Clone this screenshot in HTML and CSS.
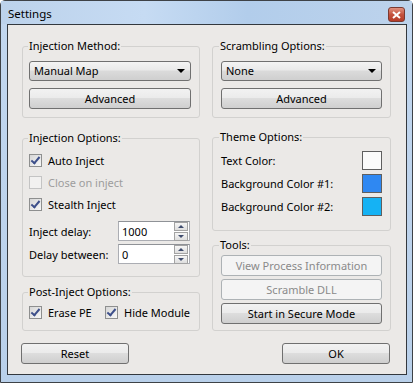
FILE: index.html
```html
<!DOCTYPE html>
<html lang="en">
<head>
    <meta charset="UTF-8">
    <title>Settings</title>
    <link rel="stylesheet" href="styles.css">
</head>
<body>
    <div class="window">
        <div class="titlebar">
            <span class="title">Settings</span>
            <span class="close">
                <svg width="9" height="8" viewBox="0 0 9 8"><path d="M1 1 L8 7 M8 1 L1 7" stroke="#fff" stroke-width="2"/></svg>
            </span>
        </div>
        <div class="client">
            <div class="columns">
                <div class="col">
                    <fieldset class="grp g-method">
                        <legend>Injection Method:</legend>
                        <div class="combo">Manual Map<span class="arrow"></span></div>
                        <div class="btn">Advanced</div>
                    </fieldset>
                    <fieldset class="grp g-inject">
                        <legend>Injection Options:</legend>
                        <div class="chk-row"><span class="chk on"></span>Auto Inject</div>
                        <div class="chk-row disabled"><span class="chk"></span>Close on inject</div>
                        <div class="chk-row"><span class="chk on"></span>Stealth Inject</div>
                        <div class="spin-row first">
                            <span class="spin-label">Inject delay:</span>
                            <div class="spin"><span class="val">1000</span><span class="arrows"><span class="up"></span><span class="down"></span></span></div>
                        </div>
                        <div class="spin-row">
                            <span class="spin-label">Delay between:</span>
                            <div class="spin"><span class="val">0</span><span class="arrows"><span class="up"></span><span class="down"></span></span></div>
                        </div>
                    </fieldset>
                    <fieldset class="grp g-post">
                        <legend>Post-Inject Options:</legend>
                        <div class="post-row">
                            <div class="chk-row erase"><span class="chk on"></span>Erase PE</div>
                            <div class="chk-row"><span class="chk on"></span>Hide Module</div>
                        </div>
                    </fieldset>
                </div>
                <div class="col right">
                    <fieldset class="grp g-method">
                        <legend>Scrambling Options:</legend>
                        <div class="combo">None<span class="arrow"></span></div>
                        <div class="btn">Advanced</div>
                    </fieldset>
                    <fieldset class="grp g-theme">
                        <legend>Theme Options:</legend>
                        <div class="theme-row">Text Color:<span class="swatch white"></span></div>
                        <div class="theme-row">Background Color #1:<span class="swatch blue"></span></div>
                        <div class="theme-row">Background Color #2:<span class="swatch cyan"></span></div>
                    </fieldset>
                    <fieldset class="grp g-tools">
                        <legend>Tools:</legend>
                        <div class="btn off">View Process Information</div>
                        <div class="btn off">Scramble DLL</div>
                        <div class="btn">Start in Secure Mode</div>
                    </fieldset>
                </div>
            </div>
            <div class="footer">
                <div class="btn wide">Reset</div>
                <div class="btn wide">OK</div>
            </div>
        </div>
    </div>
</body>
</html>
```
FILE: styles.css
```css
body {
    margin: 0;
    font-family: "Noto Sans", "Open Sans", sans-serif;
    font-size: 11px;
    color: #000;
    background: #fff;
}
.window {
    width: 413px;
    height: 383px;
    box-sizing: border-box;
    border: 1px solid #3e4247;
    border-radius: 5px 5px 0 0;
    padding: 0 5px 7px 6px;
    background: linear-gradient(to bottom, #c2d7ef, #b9d0ea);
}
.titlebar {
    height: 23px;
    display: flex;
    align-items: flex-start;
    background: linear-gradient(to right, #bcd2eb, #c6dbf3 35%, #b2cdeb 60%, #bdd3ec);
    margin: 0 -5px 0 -6px;
    padding: 0 6px 0 7px;
}
.title {
    line-height: 14px;
    margin-top: 6px;
    font-size: 11.5px;
}
.close {
    margin-left: auto;
    margin-top: 6px;
    margin-right: 1px;
    width: 15px;
    height: 13px;
    border: 1px solid #7b3a31;
    border-radius: 3px;
    background: linear-gradient(to bottom, #e1917f, #c4533f 50%, #b53b28);
    display: flex;
    align-items: center;
    justify-content: center;
}
.client {
    height: 351px;
    box-sizing: border-box;
    border: 1px solid #33383e;
    background: #ebe9e7;
    padding: 13px 15px 0 14px;
}
.columns {
    display: flex;
    gap: 12px;
}
.col {
    width: 178px;
    display: flex;
    flex-direction: column;
}
.col.right {
    width: 179px;
}
.grp {
    margin: 0;
    border: 1px solid #d2d1cf;
    border-radius: 3px;
    padding: 0 8px 0 6px;
    min-width: 0;
}
.grp legend {
    padding: 0 1px;
    margin-left: -1px;
    line-height: 16px;
}
.right .grp {
    padding-left: 8px;
}
.right .grp legend {
    margin-left: -2px;
}
.g-method {
    padding-top: 7px;
    padding-bottom: 8px;
}
.combo {
    height: 20px;
    box-sizing: border-box;
    border: 1px solid #707070;
    border-radius: 3px;
    background: linear-gradient(to bottom, #f4f4f4, #e9e9e9 45%, #dbdbdb 50%, #cfcfcf);
    padding-left: 4px;
    line-height: 18px;
    display: flex;
    align-items: center;
    margin-bottom: 7px;
}
.arrow {
    margin-left: auto;
    margin-right: 5px;
    border-left: 4px solid transparent;
    border-right: 4px solid transparent;
    border-top: 4px solid #000;
}
.btn {
    height: 21px;
    box-sizing: border-box;
    border: 1px solid #707070;
    border-radius: 3px;
    background: linear-gradient(to bottom, #f2f2f2, #ebebeb 45%, #dddddd 50%, #cfcfcf);
    text-align: center;
    line-height: 19px;
}
.btn.off {
    border-color: #adb2b5;
    background: #f4f4f4;
    color: #8a8a8a;
}
.g-inject {
    margin-top: 12px;
    padding-top: 3px;
    padding-bottom: 12px;
}
.chk-row {
    height: 22px;
    display: flex;
    align-items: center;
    gap: 6px;
    white-space: nowrap;
}
.chk-row.disabled {
    color: #9d9d9d;
}
.chk {
    width: 13px;
    height: 13px;
    box-sizing: border-box;
    border: 1px solid #8e8f8f;
    background: linear-gradient(135deg, #d6d6d6, #f7f7f7);
    display: flex;
    align-items: center;
    justify-content: center;
}
.disabled .chk {
    border-color: #c4c4c4;
    background: #f2f1f0;
}
.chk.on::after {
    content: "";
    width: 3px;
    height: 7px;
    border: solid #3d4f8a;
    border-width: 0 2px 2px 0;
    transform: translate(0, -1px) rotate(40deg);
}
.spin-row {
    height: 20px;
    display: flex;
    align-items: center;
    margin-top: 3px;
}
.spin-row.first {
    margin-top: 6px;
}
.spin-label {
    width: 89px;
}
.spin {
    width: 72px;
    height: 20px;
    box-sizing: border-box;
    border: 1px solid #abadb3;
    border-top-color: #8f9297;
    background: #fff;
    display: flex;
    align-items: center;
    padding: 0 1px 0 3px;
}
.val {
    flex: 1;
}
.arrows {
    display: flex;
    flex-direction: column;
    gap: 1px;
}
.up, .down {
    width: 12px;
    height: 7px;
    border: 1px solid #a3a3a3;
    background: linear-gradient(to bottom, #f6f6f6, #dedede);
    display: flex;
    align-items: center;
    justify-content: center;
}
.up::after {
    content: "";
    border-left: 3px solid transparent;
    border-right: 3px solid transparent;
    border-bottom: 3px solid #3f4c6e;
}
.down::after {
    content: "";
    border-left: 3px solid transparent;
    border-right: 3px solid transparent;
    border-top: 3px solid #3f4c6e;
}
.g-post {
    margin-top: 7px;
    padding-top: 1px;
    padding-bottom: 7px;
}
.post-row {
    display: flex;
}
.erase {
    width: 76px;
}
.g-theme {
    margin-top: 11px;
    padding-top: 4px;
    padding-bottom: 13px;
    display: flex;
    flex-direction: column;
    gap: 1px;
}
.theme-row {
    height: 22px;
    display: flex;
    align-items: center;
    justify-content: space-between;
}
.swatch {
    width: 20px;
    height: 19px;
    box-sizing: border-box;
    border: 1px solid #5f5f5f;
}
.swatch.white {
    background: #fbfbfb;
}
.swatch.blue {
    background: #2f88f2;
}
.swatch.cyan {
    background: #15b2f4;
}
.g-tools {
    margin-top: 6px;
    padding-top: 2px;
    padding-bottom: 6px;
    display: flex;
    flex-direction: column;
    gap: 3px;
}
.footer {
    display: flex;
    justify-content: space-between;
    margin: 12px 1px 0 -1px;
}
.btn.wide {
    width: 108px;
}
```
